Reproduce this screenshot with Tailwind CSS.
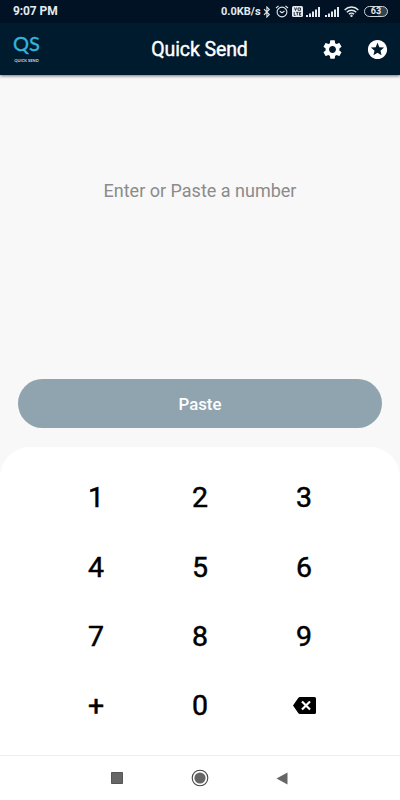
<!DOCTYPE html>
<html lang="en">
<head>
<meta charset="utf-8">
<title>Quick Send</title>
<script src="https://cdn.jsdelivr.net/npm/@tailwindcss/browser@4"></script>
</head>
<body class="overflow-hidden">
<div class="w-[400px] h-[800px] bg-[#f8f8f8] flex flex-col font-[Roboto,sans-serif]">
  <div class="h-[23px] shrink-0 bg-[#001223] text-[#e4eaee] flex items-center pl-[13px] pr-3 relative z-10">
    <span class="text-[12px] leading-[23px] font-bold tracking-[-0.1px] whitespace-nowrap">9:07 PM</span>
    <span class="ml-auto w-[40px] text-[11px] leading-[23px] font-bold whitespace-nowrap">0.0KB/s</span>
    <svg class="ml-[2px] w-[8px] h-[12px] shrink-0" viewBox="0 0 8 12" fill="none" stroke="currentColor" stroke-width="1.1"><path d="M1 3.2 6.3 8.6 3.9 11V1l2.4 2.4L1 8.8"/></svg>
    <svg class="ml-[4px] w-[14px] h-[13px] shrink-0" viewBox="0 0 14 13" fill="none" stroke="currentColor" stroke-width="1.1"><circle cx="7" cy="7" r="4.9"/><path d="M4.800 6.200 7 7.800l2.500-1.800M1 3l2.600-2.100M13 3 10.400.9"/></svg>
    <svg class="ml-[3px] w-[11px] h-[11px] shrink-0" viewBox="0 0 11 11"><rect width="11" height="11" rx="1.5" fill="currentColor"/><path d="M2.500 1.500 3.500 4.500 4.600 1.500M6 2h2.500v2.300H6zM2.200 6v3.400h1.500M4.200 6.400h2.300M5.300 6.400v3M9.200 6.400H7.500v3h1.700M7.500 7.900h1.500" fill="none" stroke="#001223" stroke-width=".8"/></svg>
    <svg class="ml-[3px] w-[14px] h-[10px] shrink-0" viewBox="0 0 14 10" fill="currentColor"><path d="M0 8h2v2H0zM3 6.500h2V10H3zM6 4.500h2V10H6zM9 2.500h2V10H9zM12 0h2v10h-2z"/></svg>
    <svg class="ml-[5px] w-[14px] h-[10px] shrink-0" viewBox="0 0 14 10" fill="currentColor"><path d="M0 8h2v2H0zM3 6.500h2V10H3zM6 4.500h2V10H6zM9 2.500h2V10H9zM12 0h2v10h-2z"/></svg>
    <svg class="ml-[5px] w-[15px] h-[11px] shrink-0" viewBox="0 0 15 11" fill="none" stroke="currentColor" stroke-width="1.4"><path d="M.6 3.900a9.800 9.800 0 0 1 13.800 0M2.800 6.200a6.700 6.700 0 0 1 9.400 0M4.900 8.300a3.700 3.700 0 0 1 5.200 0"/><circle cx="7.500" cy="9.800" r=".5"/></svg>
    <span class="ml-[5px] w-[24px] h-[11px] shrink-0 rounded-full border border-[#cdd5da] bg-linear-to-r from-[#001223] from-60% to-[#33424f] to-60% text-[9px] leading-[9px] font-bold text-center">63</span>
  </div>
  <header class="h-[52px] shrink-0 bg-[#001a2e] flex items-center justify-between pl-3 pr-[10px] relative shadow-[0_1px_3px_rgba(0,0,0,0.55)]">
    <div class="w-[76px] flex flex-col items-start">
      <span class="w-[29px] text-center font-[Lato,sans-serif] text-[20px] leading-[19px] text-[#35b4dc] [-webkit-text-stroke:0.4px_#35b4dc]">QS</span>
      <span class="w-[29px] h-[6px] mt-[5px] text-center font-[Lato,sans-serif] font-bold text-[4px] leading-[6px] text-[#d9d9d9] whitespace-nowrap">QUICK SEND</span>
    </div>
    <h1 class="mt-[2px] mr-[3px] text-[19.500px] leading-6 font-normal tracking-[-0.1px] [-webkit-text-stroke:0.4px_#fff] text-white whitespace-nowrap">Quick Send</h1>
    <div class="w-[76px] flex items-center justify-end gap-[22px] pr-px text-white">
      <svg class="w-[23px] h-[23px] shrink-0" viewBox="0 0 24 24" fill="currentColor"><path d="M19.140 12.940c.04-.3.06-.61.06-.94 0-.32-.02-.64-.07-.94l2.030-1.580c.18-.14.23-.41.12-.61l-1.920-3.320c-.12-.22-.37-.29-.59-.22l-2.390.96c-.5-.38-1.030-.7-1.620-.94l-.36-2.540c-.04-.24-.24-.41-.48-.41h-3.840c-.24 0-.43.17-.47.41l-.36 2.540c-.59.24-1.130.57-1.620.94l-2.390-.96c-.22-.08-.47 0-.59.22L2.740 8.870c-.12.21-.08.47.12.61l2.030 1.580c-.05.3-.09.63-.09.94s.02.64.07.94l-2.030 1.580c-.18.14-.23.41-.12.61l1.920 3.320c.12.22.37.29.59.22l2.390-.96c.5.38 1.030.7 1.620.94l.36 2.540c.05.24.24.41.48.41h3.840c.24 0 .44-.17.47-.41l.36-2.540c.59-.24 1.130-.56 1.620-.94l2.390.96c.22.08.47 0 .59-.22l1.920-3.320c.12-.22.07-.47-.12-.61l-2.010-1.580zM12 15.600c-1.980 0-3.600-1.620-3.600-3.600s1.620-3.600 3.600-3.600 3.600 1.620 3.600 3.600-1.620 3.600-3.600 3.600z"/></svg>
      <svg class="w-[23px] h-[23px] shrink-0" viewBox="0 0 24 24" fill="currentColor"><path d="M11.990 2C6.470 2 2 6.480 2 12s4.470 10 9.990 10C17.520 22 22 17.520 22 12S17.520 2 11.990 2zm4.240 16L12 15.450 7.770 18l1.120-4.810-3.730-3.230 4.920-.42L12 5l1.920 4.530 4.920.42-3.730 3.230L16.230 18z"/></svg>
    </div>
  </header>
  <main class="flex-1 flex flex-col">
    <div class="h-[304px] flex justify-center pt-[104px]">
      <p class="text-[18px] leading-6 text-[#8b8b8b] whitespace-nowrap">Enter or Paste a number</p>
    </div>
    <button class="mx-[18px] h-[49px] shrink-0 rounded-full bg-[#90a4af] text-white text-[16.800px] leading-6 font-medium">Paste</button>
    <section class="mt-[19px] h-[308px] shrink-0 rounded-t-[30px] bg-white flex justify-center pt-[17px]">
      <div class="grid grid-cols-[repeat(3,104px)] auto-rows-[69.300px] h-[277px] place-items-center text-[28.500px] leading-none text-black [-webkit-text-stroke:0.5px_#000]">
        <span>1</span><span>2</span><span>3</span>
        <span>4</span><span>5</span><span>6</span>
        <span>7</span><span>8</span><span>9</span>
        <span>+</span><span>0</span>
        <svg class="w-[23px] h-[17px] -mt-[3px]" viewBox="0 0 23 17"><path d="M7 0h14.500a1.500 1.500 0 0 1 1.500 1.500v14a1.500 1.500 0 0 1-1.500 1.500H7a2 2 0 0 1-1.600-.8L0 8.500 5.400.8A2 2 0 0 1 7 0z"/><path d="m9 4.500 8 8m0-8-8 8" stroke="#fff" stroke-width="2.200"/></svg>
      </div>
    </section>
  </main>
  <nav class="h-[45px] shrink-0 bg-white border-t border-[#eeeeee] grid grid-cols-[repeat(3,83px)] justify-center place-items-center">
    <svg class="w-[12px] h-[12px]" viewBox="0 0 12 12"><path d="M.5.500h11v11H.5z" fill="#666" stroke="#555"/></svg>
    <svg class="w-[18px] h-[18px]" viewBox="0 0 18 18"><circle cx="9" cy="9" r="7.800" fill="none" stroke="#444" stroke-width="1.100"/><circle cx="9" cy="9" r="5.600" fill="#666"/></svg>
    <svg class="w-[12px] h-[13px] -ml-[3px]" viewBox="0 0 12 13"><path d="M.5 6.500 11.500 .5v12z" fill="#666"/></svg>
  </nav>
</div>
</body>
</html>
